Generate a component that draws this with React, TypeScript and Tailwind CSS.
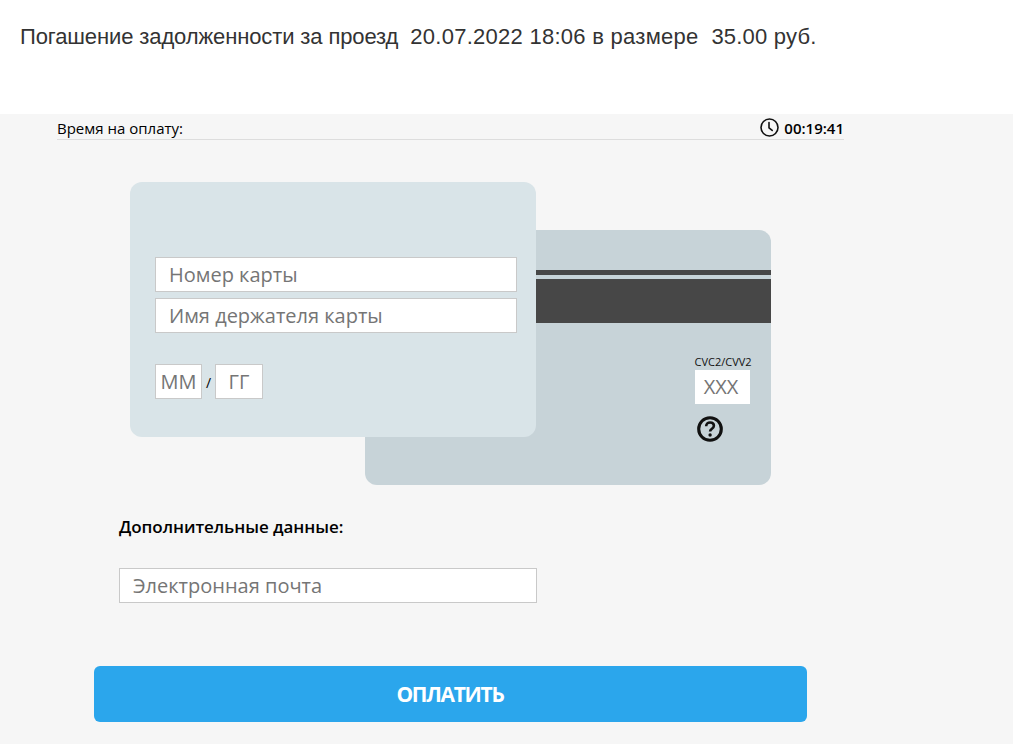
import React from "react";

function Field({ w, text, pl = "pl-[13px]", size = "text-[20px]", center = false, h = "h-[35px]" }: { w: string; text: string; pl?: string; size?: string; center?: boolean; h?: string }) {
  return (
    <div className={`${w} ${h} bg-white border border-[#c9c9c9] flex items-center ${center ? "justify-center" : pl} ${size} text-[#757575] leading-none`}>
      {text}
    </div>
  );
}

export default function App() {
  return (
    <div className="w-[1029px] h-[744px] bg-white overflow-hidden text-black" style={{ fontFamily: '"Open Sans", "Noto Sans", sans-serif' }}>
      <div className="h-[114px] pl-[20px] pt-[22px] text-[22px] leading-[30px] text-[#333333] whitespace-pre" style={{ fontFamily: '"Liberation Sans", Arial, sans-serif' }}>
        <span className="tracking-[-0.12px]">{"Погашение задолженности за проезд  "}</span>
        <span className="tracking-[0.27px]">{"20.07.2022 18:06 в размере  "}</span>
        <span className="tracking-[0.2px]">{"35.00 руб."}</span>
      </div>

      <div className="w-[1013px] h-[630px] bg-[#f6f6f6] flex flex-col items-start">
        <div className="ml-[57px] w-[787px] h-[26px] border-b border-[#dddddd] flex items-center justify-between text-[15px] leading-none">
          <span className="mt-[3px]">Время на оплату:</span>
          <span className="flex items-center gap-[5px] font-semibold">
            <svg className="mt-[2px]" width="19" height="19" viewBox="0 0 19 19" fill="none" stroke="#111" strokeWidth="1.6" strokeLinecap="round">
              <circle cx="9.5" cy="9.5" r="8.5" />
              <path d="M9 4.5v5.3l3.2 2.6" />
            </svg>
            <span className="mt-[3px]">00:19:41</span>
          </span>
        </div>

        <div className="relative ml-[130px] mt-[42px] w-[641px] h-[303px]">
          <div className="absolute left-[235px] top-[48px] w-[406px] h-[255px] rounded-[12px] bg-[#c7d3d8] pt-[40px] flex flex-col">
            <div className="h-[5px] bg-[#474747]" />
            <div className="h-[44px] mt-[4px] bg-[#474747]" />
            <div className="ml-[330px] mt-[33px] w-[55px] flex flex-col items-center">
              <div className="text-[11px] leading-[14px] -mt-[1px] mb-[1px] ml-[1px] whitespace-nowrap text-[#111]">CVC2/CVV2</div>
              <div className="w-[55px] h-[34px] bg-white flex items-center justify-center pr-[3px] text-[20px] leading-none text-[#757575]">XXX</div>
              <svg className="self-start mt-[11px] ml-[1px]" width="28" height="28" viewBox="0 0 28 28" fill="none">
                <circle cx="14" cy="14" r="11.3" stroke="#111" strokeWidth="3.1" />
                <path d="M10.2 11.2c0-2.3 1.7-3.7 3.9-3.7s3.8 1.3 3.8 3.3c0 2.9-3.8 2.9-3.8 5.6" stroke="#111" strokeWidth="2.6" />
                <circle cx="14.1" cy="20" r="1.7" fill="#111" />
              </svg>
            </div>
          </div>

          <div className="absolute left-0 top-0 w-[406px] h-[255px] rounded-[12px] bg-[#d9e4e8] pl-[25px] pt-[75px] flex flex-col">
            <Field w="w-[362px]" h="h-[35px]" text="Номер карты" />
            <div className="mt-[6px]">
              <Field w="w-[362px]" h="h-[35px]" text="Имя держателя карты" />
            </div>
            <div className="mt-[31px] flex items-center">
              <Field w="w-[47px]" text="ММ" center />
              <span className="w-[13px] text-center text-[14px] leading-none mt-[2px]">/</span>
              <Field w="w-[48px]" text="ГГ" center />
            </div>
          </div>
        </div>

        <div className="ml-[119px] mt-[31px] text-[17px] leading-[22px] font-semibold tracking-[-0.05px]">Дополнительные данные:</div>
        <div className="ml-[119px] mt-[30px]">
          <Field w="w-[418px]" text="Электронная почта" />
        </div>
        <div className="ml-[94px] mt-[63px] w-[713px] h-[56px] rounded-[6px] bg-[#2ba6ec] flex items-center justify-center text-white text-[21px] font-bold leading-none -tracking-[1.3px]">
          <span className="mr-[1px]">ОПЛАТИТЬ</span>
        </div>
      </div>
    </div>
  );
}
